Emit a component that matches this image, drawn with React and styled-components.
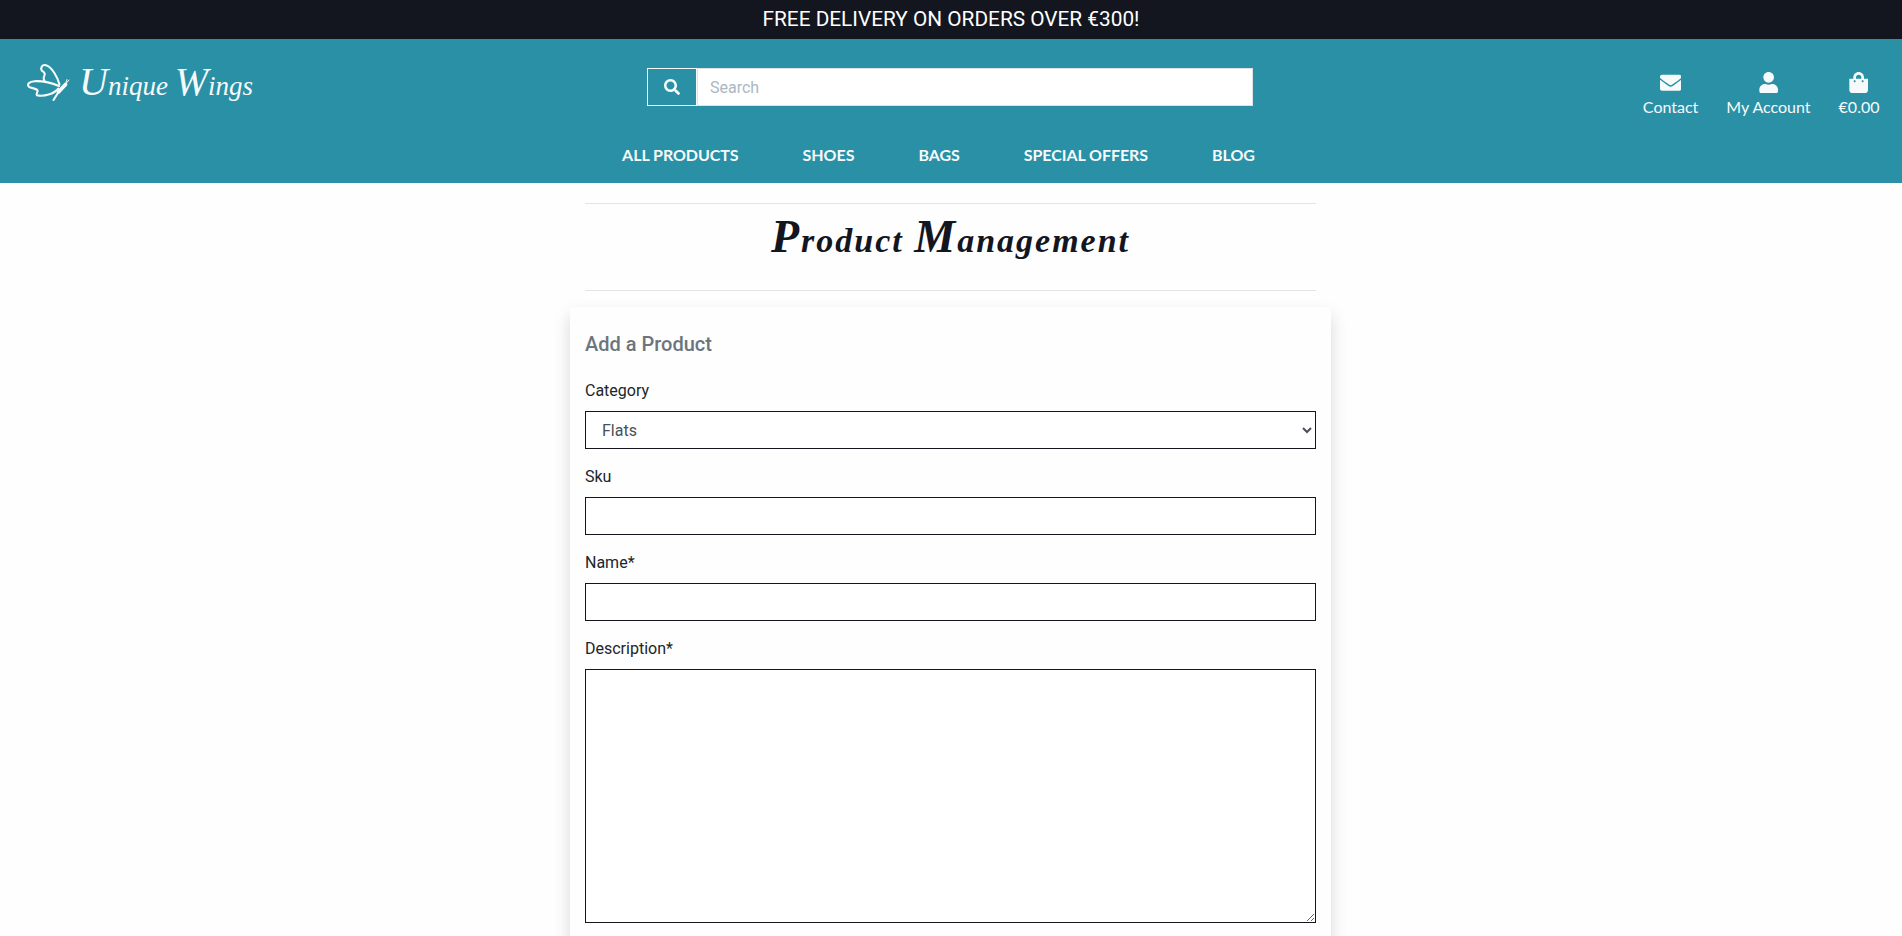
import React from "react";
import styled, { createGlobalStyle } from "styled-components";
import { FaEnvelope, FaUser, FaShoppingBag, FaSearch } from "react-icons/fa";

const GlobalStyle = createGlobalStyle`
  *, *::before, *::after { box-sizing: border-box; }
  body {
    margin: 0;
    background: #fefefe;
    color: #212529;
    font: 400 16px/24px Roboto, sans-serif;
  }
`;

const Screen = styled.div`
  height: 936px;
  overflow: hidden;
`;

const Banner = styled.div`
  height: 39px;
  padding-top: 4px;
  background: #13161f;
  color: #fff;
  text-align: center;
  font-size: 20.8px;
  line-height: 31px;
`;

const Header = styled.header`
  height: 144px;
  background: #2990a6;
  color: #f7fafb;
  font-family: Lato, sans-serif;
`;

const TopRow = styled.div`
  display: grid;
  grid-template-columns: 647px 606px 1fr;
  height: 97px;
`;

const Brand = styled.a`
  display: flex;
  align-items: flex-start;
  padding: 22px 0 0 25px;
`;

const BrandName = styled.span`
  margin: 5px 0 0 6px;
  font: italic 400 27px/40px "Liberation Serif", serif;
  white-space: nowrap;
`;

const Capital = styled.span`
  font-size: ${(p) => p.$size}px;
  line-height: 1px;
`;

const SearchForm = styled.form`
  display: flex;
  height: 38px;
  margin: 29px 0 0;
`;

const SearchButton = styled.button`
  width: 50px;
  padding: 0;
  border: 1px solid #f7fafb;
  background: transparent;
  color: #f7fafb;
  display: flex;
  align-items: center;
  justify-content: center;
`;

const SearchInput = styled.input`
  flex: 1;
  min-width: 0;
  padding: 7px 12px 5px;
  border: 1px solid #dee2e6;
  border-radius: 0;
  background: #fff;
  font: 400 16px/24px Roboto, sans-serif;
  &::placeholder { color: #aab7c4; opacity: 1; }
`;

const Links = styled.div`
  display: flex;
  justify-content: flex-end;
  gap: 28px;
  padding: 33px 22.5px 0 0;
`;

const IconLink = styled.a`
  display: flex;
  flex-direction: column;
  align-items: center;
  font-size: 16px;
  line-height: 24px;
  white-space: nowrap;
  svg { font-size: 21.33px; margin-bottom: 2px; }
`;

const Nav = styled.nav`
  display: flex;
  justify-content: center;
  gap: 64px;
  padding: 7px 25px 0 0;
  font-size: 16px;
  font-weight: 700;
  line-height: 24px;
  letter-spacing: -0.05px;
`;

const Page = styled.main`
  width: 761px;
  margin: 20px 571px 0 570px;
`;

const TitleBlock = styled.div`
  height: 88px;
  margin: 0 15px 16px;
  border-top: 1px solid #e3e4e5;
  border-bottom: 1px solid #e3e4e5;
`;

const Title = styled.h1`
  margin: 7px 0 0;
  text-align: center;
  color: #13161f;
  font: italic 700 34px/60px "Liberation Serif", serif;
  letter-spacing: 2px;
`;

const Card = styled.section`
  height: 700px;
  padding: 25px 15px;
  background: #fefefe;
  box-shadow: 0 8px 16px rgba(0, 0, 0, 0.15);
`;

const CardTitle = styled.h5`
  margin: 0 0 23px;
  color: #6c757d;
  font-size: 20px;
  font-weight: 500;
  line-height: 24px;
`;

const Field = styled.div`
  margin-bottom: 16px;
`;

const Label = styled.label`
  display: block;
  margin-bottom: 8px;
`;

const Control = styled.input`
  display: block;
  width: 100%;
  height: ${(p) => p.$tall || 38}px;
  padding: 6px 12px;
  border: 1px solid #13161f;
  border-radius: 0;
  background: #fff;
  color: #495057;
  font: 400 16px/24px Roboto, sans-serif;
`;

function Butterfly() {
  return (
    <svg width="48" height="42" viewBox="25 61 48 42" fill="none" stroke="#f7fafb" strokeWidth="2.1" strokeLinecap="round" strokeLinejoin="round">
      <path d="M59.5 84.5C57.5 77 52 67 46 65.200C42 64.300 40 68 42 70.800C45 72.500 45.500 74.500 43.800 77C43.300 79 44 80 44.500 80.800" />
      <path d="M59 86C52 83 43 80.800 34.500 81.200C29 81.700 26.500 84.500 29 86.800C31.500 88.300 36.500 88.300 37.500 90.500C38 93 35.500 93.500 37 95.300C44 97 54 94 58.500 88.500" />
      <path d="M53.500 100L58.500 92" />
      <path d="M58.500 92L65.500 84.500" strokeWidth="3.800" />
      <path d="M65.500 84L67 79.500M66.500 83L69 80" strokeWidth="1" />
    </svg>
  );
}

const LINKS = [
  { Icon: FaEnvelope, text: "Contact" },
  { Icon: FaUser, text: "My Account" },
  { Icon: FaShoppingBag, text: "€0.00" },
];
const MENU = ["ALL PRODUCTS", "SHOES", "BAGS", "SPECIAL OFFERS", "BLOG"];

export default function App() {
  return (
    <Screen>
      <GlobalStyle />
      <Banner>FREE DELIVERY ON ORDERS OVER €300!</Banner>
      <Header>
        <TopRow>
          <Brand>
            <Butterfly />
            <BrandName>
              <Capital $size={40}>U</Capital>nique <Capital $size={40}>W</Capital>ings
            </BrandName>
          </Brand>
          <SearchForm>
            <SearchButton type="button" aria-label="Search"><FaSearch size={16} /></SearchButton>
            <SearchInput placeholder="Search" />
          </SearchForm>
          <Links>
            {LINKS.map(({ Icon, text }) => (
              <IconLink key={text}><Icon />{text}</IconLink>
            ))}
          </Links>
        </TopRow>
        <Nav>{MENU.map((m) => <a key={m}>{m}</a>)}</Nav>
      </Header>
      <Page>
        <TitleBlock>
          <Title>
            <Capital $size={46}>P</Capital>roduct <Capital $size={46}>M</Capital>anagement
          </Title>
        </TitleBlock>
        <Card>
          <CardTitle>Add a Product</CardTitle>
          <Field>
            <Label>Category</Label>
            <Control as="select"><option>Flats</option></Control>
          </Field>
          <Field><Label>Sku</Label><Control /></Field>
          <Field><Label>Name*</Label><Control /></Field>
          <Field><Label>Description*</Label><Control as="textarea" $tall={254} /></Field>
        </Card>
      </Page>
    </Screen>
  );
}
